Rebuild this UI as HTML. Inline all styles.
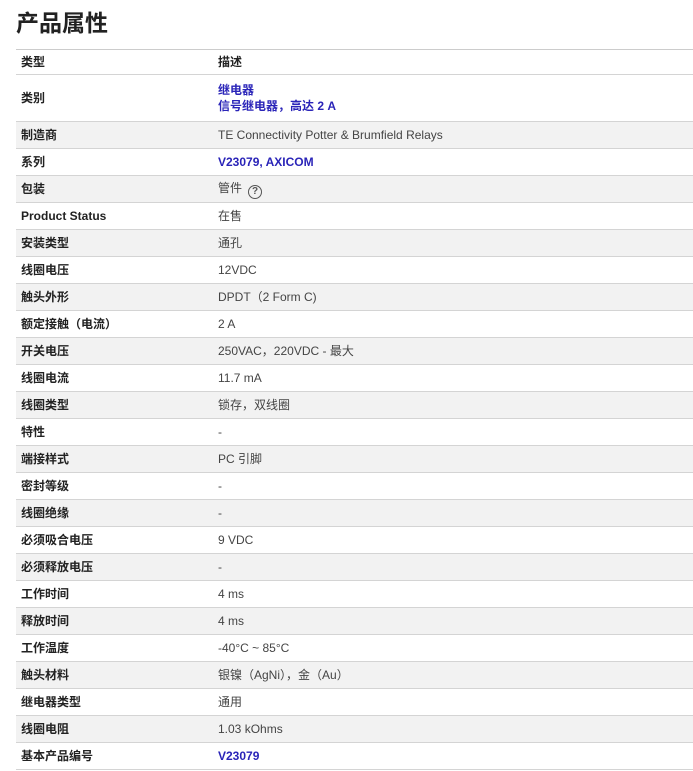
<!DOCTYPE html>
<html><head><meta charset="utf-8"><style>
body{margin:0;background:#fff;font-family:"Liberation Sans","Noto Sans CJK SC",sans-serif;width:693px;height:771px;overflow:hidden}
h1{position:absolute;left:16px;top:8px;margin:0;font-size:23px;font-weight:bold;color:#222;line-height:30px}
table{position:absolute;left:16px;top:49px;width:677px;border-collapse:collapse;font-size:12px}
td{border-top:1px solid #d4d4d4;height:26px;padding:0 0 0 5px;color:#444;line-height:16px}
td:first-child{width:192px;font-weight:bold;color:#222}
tr:nth-child(odd){background:#f2f2f2}
tr:first-child,tr:nth-child(2){background:#fff}
tr:first-child td{font-weight:bold;color:#222;height:24px;border-top:1px solid #ccc}
tr:last-child td{border-bottom:1px solid #d4d4d4}
.l{color:#2a24b8;font-weight:bold}
.q{display:inline-block;width:12px;height:12px;border:1.3px solid #555;border-radius:50%;font-size:10px;line-height:12px;text-align:center;color:#555;margin-left:6px;vertical-align:-2px;font-weight:bold}
</style></head><body>
<h1>产品属性</h1>
<table>
<tr><td>类型</td><td>描述</td></tr>
<tr><td style="height:46px">类别</td><td class="l">继电器<br>信号继电器，高达 2 A</td></tr>
<tr><td>制造商</td><td>TE Connectivity Potter &amp; Brumfield Relays</td></tr>
<tr><td>系列</td><td class="l">V23079, AXICOM</td></tr>
<tr><td>包装</td><td>管件<span class="q">?</span></td></tr>
<tr><td>Product Status</td><td>在售</td></tr>
<tr><td>安装类型</td><td>通孔</td></tr>
<tr><td>线圈电压</td><td>12VDC</td></tr>
<tr><td>触头外形</td><td>DPDT（2 Form C)</td></tr>
<tr><td>额定接触（电流）</td><td>2 A</td></tr>
<tr><td>开关电压</td><td>250VAC，220VDC - 最大</td></tr>
<tr><td>线圈电流</td><td>11.7 mA</td></tr>
<tr><td>线圈类型</td><td>锁存，双线圈</td></tr>
<tr><td>特性</td><td>-</td></tr>
<tr><td>端接样式</td><td>PC 引脚</td></tr>
<tr><td>密封等级</td><td>-</td></tr>
<tr><td>线圈绝缘</td><td>-</td></tr>
<tr><td>必须吸合电压</td><td>9 VDC</td></tr>
<tr><td>必须释放电压</td><td>-</td></tr>
<tr><td>工作时间</td><td>4 ms</td></tr>
<tr><td>释放时间</td><td>4 ms</td></tr>
<tr><td>工作温度</td><td>-40°C ~ 85°C</td></tr>
<tr><td>触头材料</td><td>银镍（AgNi），金（Au）</td></tr>
<tr><td>继电器类型</td><td>通用</td></tr>
<tr><td>线圈电阻</td><td>1.03 kOhms</td></tr>
<tr><td>基本产品编号</td><td class="l">V23079</td></tr>
</table>
</body></html>
